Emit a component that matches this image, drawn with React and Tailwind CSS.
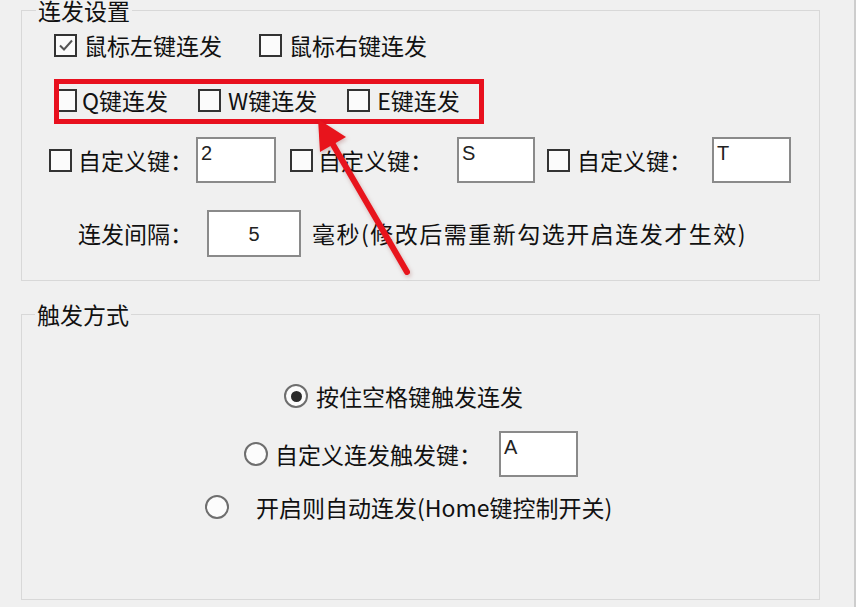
import React from "react";

const FONT = { fontFamily: '"Noto Sans CJK SC", "Noto Sans", sans-serif' };

function Box({ checked }) {
  return (
    <span className="flex h-[23px] w-[23px] shrink-0 items-center justify-center border-2 border-[#333] bg-[#fbfbfb]">
      {checked && (
        <svg width="16" height="14" viewBox="0 0 16 14">
          <path d="M2 7.5 L6 11.5 L14 2.5" fill="none" stroke="#555" strokeWidth="2" />
        </svg>
      )}
    </span>
  );
}

function Radio({ on }) {
  return (
    <span className="flex h-[24px] w-[24px] shrink-0 items-center justify-center rounded-full border-2 border-[#6e6e6e] bg-[#fcfcfc]">
      {on && <span className="h-[11px] w-[11px] rounded-full bg-[#2b2b2b]" />}
    </span>
  );
}

function Field({ value, center, className = "" }) {
  return (
    <div
      className={`flex border-2 border-[#8a8a8a] bg-white text-[20px] leading-none text-[#222] ${
        center ? "items-center justify-center" : "items-start pl-[3px] pt-[4px]"
      } ${className}`}
      style={{ fontFamily: '"Liberation Sans", Arial, sans-serif' }}
    >
      {value}
    </div>
  );
}

function Label({ children, className = "" }) {
  return <span className={`whitespace-nowrap text-[23px] leading-none text-[#111] ${className}`}>{children}</span>;
}

export default function App() {
  return (
    <div
      className="relative h-[607px] w-[856px] overflow-hidden border-r-2 border-[#cdcdcd] bg-[#f0f0f0]"
      style={FONT}
    >
      {/* 连发设置 */}
      <fieldset className="ml-[21px] -mt-[3px] h-[284px] w-[799px] border border-[#d8d8d8]">
        <legend className="ml-[14px] px-[2px] text-[23px] leading-[26px] text-[#111]">连发设置</legend>

        <div className="mt-[7px] flex h-[30px] items-center pl-[32px]">
          <Box checked />
          <Label className="ml-[7px]">鼠标左键连发</Label>
          <span className="ml-[37px]" />
          <Box />
          <Label className="ml-[7px]">鼠标右键连发</Label>
        </div>

        <div className="mt-[25px] flex h-[30px] items-center pl-[32px]">
          <Box />
          <Label className="ml-[5px]">Q键连发</Label>
          <span className="ml-[30px]" />
          <Box />
          <Label className="ml-[7px]">W键连发</Label>
          <span className="ml-[30px]" />
          <Box />
          <Label className="ml-[7px]">E键连发</Label>
        </div>

        <div className="mt-[22px] flex h-[46px] items-center pl-[27px]">
          <Box />
          <Label className="ml-[6px]">自定义键：</Label>
          <Field value="2" className="ml-[3px] h-[46px] w-[80px]" />
          <span className="ml-[14px]" />
          <Box />
          <Label className="ml-[5px]">自定义键：</Label>
          <Field value="S" className="ml-[24px] h-[46px] w-[78px]" />
          <span className="ml-[12px]" />
          <Box />
          <Label className="ml-[7px]">自定义键：</Label>
          <Field value="T" className="ml-[20px] h-[46px] w-[79px]" />
        </div>

        <div className="mt-[27px] flex h-[47px] items-center pl-[56px]">
          <Label>连发间隔：</Label>
          <Field value="5" center className="ml-[14px] h-[47px] w-[94px]" />
          <Label className="ml-[11px] tracking-[1.5px]">毫秒(修改后需重新勾选开启连发才生效)</Label>
        </div>
      </fieldset>

      {/* 触发方式 */}
      <fieldset className="ml-[21px] mt-[20px] h-[299px] w-[799px] border border-[#d8d8d8]">
        <legend className="ml-[13px] px-[2px] text-[23px] leading-[26px] text-[#111]">触发方式</legend>

        <div className="mt-[54px] flex h-[30px] items-center pl-[262px]">
          <Radio on />
          <Label className="ml-[8px]">按住空格键触发连发</Label>
        </div>

        <div className="mt-[20px] flex h-[46px] items-center pl-[222px]">
          <Radio />
          <Label className="ml-[7px]">自定义连发触发键：</Label>
          <Field value="A" className="ml-[17px] h-[46px] w-[79px]" />
        </div>

        <div className="mt-[15px] flex h-[30px] items-center pl-[183px]">
          <Radio />
          <Label className="ml-[27px]">开启则自动连发(Home键控制开关)</Label>
        </div>
      </fieldset>

      {/* annotation: red box + arrow */}
      <div className="pointer-events-none absolute left-[54px] top-[79px] h-[45px] w-[430px] border-[5px] border-[#e8101e]" />
      <svg
        className="pointer-events-none absolute left-0 top-0"
        width="856"
        height="607"
        viewBox="0 0 856 607"
        style={{ filter: "drop-shadow(1px 2px 2px rgba(120,0,0,0.25))" }}
      >
        <line x1="407" y1="272" x2="328" y2="136" stroke="#e8141c" strokeWidth="6" strokeLinecap="round" />
        <polygon points="318,119 346,137 320,152" fill="#e8141c" />
      </svg>
    </div>
  );
}
